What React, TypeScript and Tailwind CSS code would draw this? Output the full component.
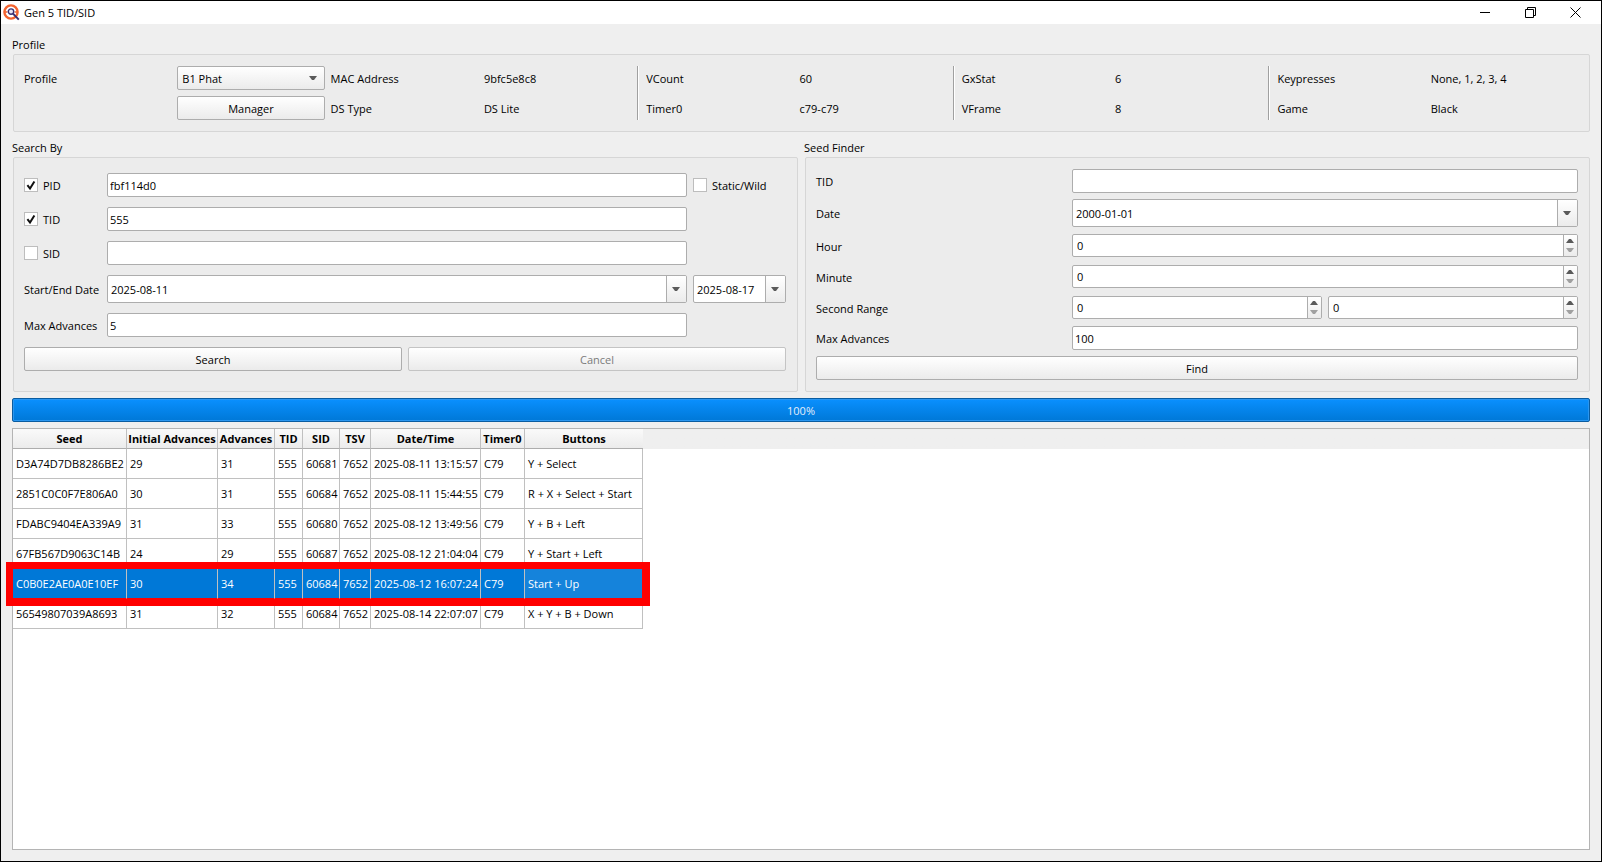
import React, { useState } from "react";

interface SearchResult {
  seed: string;
  initialAdvances: number;
  advances: number;
  tid: number;
  sid: number;
  tsv: number;
  dateTime: string;
  timer0: string;
  buttons: string;
}

const results: SearchResult[] = [
  { seed: "D3A74D7DB8286BE2", initialAdvances: 29, advances: 31, tid: 555, sid: 60681, tsv: 7652, dateTime: "2025-08-11 13:15:57", timer0: "C79", buttons: "Y + Select" },
  { seed: "2851C0C0F7E806A0", initialAdvances: 30, advances: 31, tid: 555, sid: 60684, tsv: 7652, dateTime: "2025-08-11 15:44:55", timer0: "C79", buttons: "R + X + Select + Start" },
  { seed: "FDABC9404EA339A9", initialAdvances: 31, advances: 33, tid: 555, sid: 60680, tsv: 7652, dateTime: "2025-08-12 13:49:56", timer0: "C79", buttons: "Y + B + Left" },
  { seed: "67FB567D9063C14B", initialAdvances: 24, advances: 29, tid: 555, sid: 60687, tsv: 7652, dateTime: "2025-08-12 21:04:04", timer0: "C79", buttons: "Y + Start + Left" },
  { seed: "C0B0E2AE0A0E10EF", initialAdvances: 30, advances: 34, tid: 555, sid: 60684, tsv: 7652, dateTime: "2025-08-12 16:07:24", timer0: "C79", buttons: "Start + Up" },
  { seed: "56549807039A8693", initialAdvances: 31, advances: 32, tid: 555, sid: 60684, tsv: 7652, dateTime: "2025-08-14 22:07:07", timer0: "C79", buttons: "X + Y + B + Down" },
];

const columns = [
  { title: "Seed", width: "w-[114px]" },
  { title: "Initial Advances", width: "w-[91px]" },
  { title: "Advances", width: "w-[57px]" },
  { title: "TID", width: "w-[28px]" },
  { title: "SID", width: "w-[37px]" },
  { title: "TSV", width: "w-[31px]" },
  { title: "Date/Time", width: "w-[110px]" },
  { title: "Timer0", width: "w-[44px]" },
  { title: "Buttons", width: "w-[118px]" },
];

const fieldClass =
  "w-full min-w-0 border border-[#adadad] rounded-[2px] bg-white outline-none";
const buttonClass =
  "h-6 w-full rounded-[2px] border border-[#adadad] bg-linear-to-b from-white to-[#ebebeb] pt-px text-center disabled:border-[#c4c4c4] disabled:text-[#7b7b7b]";

const ArrowDown = ({ className = "" }: { className?: string }) => (
  <svg className={className} width="8" height="4" viewBox="0 0 8 4">
    <path d="M0 0h8L5 4H3z" fill="currentColor" />
  </svg>
);

const ArrowUp = () => (
  <svg width="8" height="4" viewBox="0 0 8 4">
    <path d="M0 4h8L5 0H3z" fill="currentColor" />
  </svg>
);

interface FieldProps {
  id: string;
  value?: string;
  label?: string;
}

const TextField: React.FC<FieldProps> = ({ id, value = "", label }) => (
  <input
    id={id}
    type="text"
    aria-label={label}
    defaultValue={value}
    className={`${fieldClass} h-6 px-[2px]`}
  />
);

const DateField: React.FC<FieldProps> = ({ id, value, label }) => (
  <div className={`${fieldClass} flex h-7 overflow-hidden`}>
    <input
      id={id}
      type="text"
      aria-label={label}
      defaultValue={value}
      className="min-w-0 flex-1 pt-px pl-[3px] outline-none"
    />
    <button
      type="button"
      aria-label="Open calendar"
      className="flex w-5 items-center justify-center border-l border-[#adadad] bg-linear-to-b from-white to-[#ebebeb] pr-[2px] text-[#5a5a5a]"
    >
      <ArrowDown />
    </button>
  </div>
);

const SpinField: React.FC<FieldProps> = ({ id, value = "0", label }) => {
  const [count, setCount] = useState(Number(value));

  return (
    <div className={`${fieldClass} flex h-[23px] overflow-hidden`}>
      <input
        id={id}
        type="text"
        inputMode="numeric"
        aria-label={label}
        value={count}
        onChange={(e) => setCount(Number(e.target.value) || 0)}
        className="min-w-0 flex-1 pl-1 outline-none"
      />
      <div className="flex w-[14px] flex-col border-l border-[#adadad] bg-linear-to-b from-white to-[#ebebeb] py-px pr-px">
        <button
          type="button"
          aria-label="Increase"
          onClick={() => setCount(count + 1)}
          className="flex flex-1 items-center justify-center text-[#5a5a5a]"
        >
          <ArrowUp />
        </button>
        <button
          type="button"
          aria-label="Decrease"
          disabled={count === 0}
          onClick={() => setCount(count - 1)}
          className="flex flex-1 items-center justify-center text-[#5a5a5a] disabled:text-[#a0a0a0]"
        >
          <ArrowDown />
        </button>
      </div>
    </div>
  );
};

const CheckField = ({ label, checked = false }: { label: string; checked?: boolean }) => (
  <label className="flex items-center gap-[5px]">
    <span className="relative h-[14px] w-[14px]">
      <input
        type="checkbox"
        defaultChecked={checked}
        className="peer block h-[14px] w-[14px] appearance-none border border-[#bdbdbd] bg-white"
      />
      <svg
        className="pointer-events-none absolute inset-0 hidden peer-checked:block"
        width="14"
        height="14"
        viewBox="0 0 14 14"
      >
        <path d="M3.4 7.2L6 10.6L10.4 3.4" fill="none" stroke="#111" strokeWidth="2" />
      </svg>
    </span>
    <span className="pt-[2px]">{label}</span>
  </label>
);

const FieldLabel = ({ htmlFor, children }: { htmlFor: string; children: React.ReactNode }) => (
  <label htmlFor={htmlFor} className="pt-[2px]">
    {children}
  </label>
);

const GroupBox = ({ title, children }: { title: string; children: React.ReactNode }) => (
  <section className="flex min-w-0 flex-col">
    <h2 className="mb-px">{title}</h2>
    <div className="ml-px flex-1 rounded-[2px] border border-[#d6d6d6] bg-[#ececec] pr-[11px] pl-[10px]">
      {children}
    </div>
  </section>
);

const Divider = () => (
  <div className="row-span-2 w-[2px] border-l border-[#a0a0a0] bg-white" />
);

const TitleBar = () => (
  <header className="flex h-[23px] items-center bg-white">
    <svg className="ml-[2px]" width="17" height="17" viewBox="0 0 17 17">
      <circle cx="8" cy="8" r="6.6" fill="#fff" stroke="#f4632f" strokeWidth="2.4" />
      <path d="M1 8h3.4M11.6 8h3" stroke="#f4632f" strokeWidth="1.6" />
      <circle cx="8" cy="7.6" r="2.7" fill="#e9e6f5" stroke="#3a2f70" strokeWidth="1.4" />
      <path d="M10 9.6L15.8 15.6" stroke="#3a2f70" strokeWidth="2" />
    </svg>
    <h1 className="ml-1 flex-1">Gen 5 TID/SID</h1>
    <button type="button" aria-label="Minimize" className="flex w-[45px] justify-center">
      <svg width="11" height="11" viewBox="0 0 11 11">
        <path d="M0 5.5h10" stroke="#000" />
      </svg>
    </button>
    <button type="button" aria-label="Restore" className="flex w-[45px] justify-center">
      <svg width="11" height="11" viewBox="0 0 11 11" fill="none" stroke="#000">
        <path d="M.5 2.5h8v8h-8zM2.5 2.5v-2h8v8h-2" />
      </svg>
    </button>
    <button type="button" aria-label="Close" className="mr-[3px] flex w-[45px] justify-center">
      <svg width="11" height="11" viewBox="0 0 11 11" stroke="#000">
        <path d="M.5 .5l10 10M10.5 .5l-10 10" />
      </svg>
    </button>
  </header>
);

const ProfileBox = () => (
  <GroupBox title="Profile">
    <div className="grid grid-cols-[repeat(4,minmax(0,1fr))_3px_repeat(2,minmax(0,1fr))_3px_repeat(2,minmax(0,1fr))_3px_repeat(2,minmax(0,1fr))] grid-rows-[24px_24px] gap-[6px] py-[11px] leading-[26px]">
      <label htmlFor="profile">Profile</label>
      <div className="relative">
        <select
          id="profile"
          className={`${buttonClass} block appearance-none pl-1 text-left leading-5`}
        >
          <option>B1 Phat</option>
        </select>
        <ArrowDown className="pointer-events-none absolute top-[10px] right-2 text-[#5a5a5a]" />
      </div>
      <span>MAC Address</span>
      <span>9bfc5e8c8</span>
      <Divider />
      <span>VCount</span>
      <span>60</span>
      <Divider />
      <span>GxStat</span>
      <span>6</span>
      <Divider />
      <span>Keypresses</span>
      <span>None, 1, 2, 3, 4</span>

      <button type="button" className={`${buttonClass} col-start-2 leading-5`}>
        Manager
      </button>
      <span>DS Type</span>
      <span>DS Lite</span>
      <span>Timer0</span>
      <span>c79-c79</span>
      <span>VFrame</span>
      <span>8</span>
      <span>Game</span>
      <span>Black</span>
    </div>
  </GroupBox>
);

const SearchBox = () => (
  <GroupBox title="Search By">
    <div className="grid grid-cols-[77px_minmax(0,1fr)_93px] items-center gap-x-[6px] gap-y-[10px] pt-[15px] whitespace-nowrap">
      <CheckField label="PID" checked />
      <TextField id="search-pid" label="PID" value="fbf114d0" />
      <CheckField label="Static/Wild" />

      <CheckField label="TID" checked />
      <TextField id="search-tid" label="TID" value="555" />
      <span />

      <CheckField label="SID" />
      <TextField id="search-sid" label="SID" />
      <span />

      <FieldLabel htmlFor="start-date">Start/End Date</FieldLabel>
      <DateField id="start-date" value="2025-08-11" />
      <DateField id="end-date" label="End Date" value="2025-08-17" />

      <FieldLabel htmlFor="search-max">Max Advances</FieldLabel>
      <TextField id="search-max" value="5" />
    </div>
    <div className="mt-[10px] grid grid-cols-2 gap-[6px] pb-5">
      <button type="button" className={buttonClass}>
        Search
      </button>
      <button type="button" disabled className={buttonClass}>
        Cancel
      </button>
    </div>
  </GroupBox>
);

const SeedFinderBox = () => (
  <GroupBox title="Seed Finder">
    <div className="grid grid-cols-3 grid-rows-[24px_28px_25px_25px_25px_24px_24px] items-center gap-[6px] py-[11px]">
      <FieldLabel htmlFor="finder-tid">TID</FieldLabel>
      <div className="col-span-2">
        <TextField id="finder-tid" />
      </div>

      <FieldLabel htmlFor="finder-date">Date</FieldLabel>
      <div className="col-span-2">
        <DateField id="finder-date" value="2000-01-01" />
      </div>

      <FieldLabel htmlFor="finder-hour">Hour</FieldLabel>
      <div className="col-span-2">
        <SpinField id="finder-hour" />
      </div>

      <FieldLabel htmlFor="finder-minute">Minute</FieldLabel>
      <div className="col-span-2">
        <SpinField id="finder-minute" />
      </div>

      <FieldLabel htmlFor="finder-second">Second Range</FieldLabel>
      <SpinField id="finder-second" />
      <SpinField id="finder-second-end" label="Second Range End" />

      <FieldLabel htmlFor="finder-max">Max Advances</FieldLabel>
      <div className="col-span-2">
        <TextField id="finder-max" value="100" />
      </div>

      <button type="button" className={`${buttonClass} col-span-3`}>
        Find
      </button>
    </div>
  </GroupBox>
);

const ResultsTable = () => {
  const [selected, setSelected] = useState(4);

  return (
    <div className="mt-[6px] flex-1 border border-[#b4b4b4] bg-white">
      <div className="bg-linear-to-b from-[#efefef] from-[20px] to-transparent to-[20px]">
        <table className="w-[630px] table-fixed border-separate border-spacing-0 text-left whitespace-nowrap">
          <thead>
            <tr className="h-5 bg-linear-to-b from-[#fafafa] to-[#ebebeb]">
              {columns.map((column) => (
                <th
                  key={column.title}
                  className={`${column.width} border-r border-b border-[#c0c0c0] border-b-[#adadad] p-0 pt-px text-center font-bold last:border-r-0`}
                >
                  {column.title}
                </th>
              ))}
            </tr>
          </thead>
          <tbody>
            {results.map((result, index) => (
              <tr
                key={result.seed}
                onClick={() => setSelected(index)}
                className={
                  index === selected
                    ? "relative h-[30px] bg-[#0078d7] text-white outline-[7px] outline-[#ff0000]"
                    : "h-[30px] bg-white"
                }
              >
                {Object.values(result).map((value, i) => (
                  <td
                    key={i}
                    className={`border-r border-b border-[#c0c0c0] p-0 pl-[3px] ${
                      index === selected ? "border-b-[#ff0000] last:border-r-[#ff0000] last:bg-[#1583db]" : ""
                    }`}
                  >
                    {value}
                  </td>
                ))}
              </tr>
            ))}
          </tbody>
        </table>
      </div>
    </div>
  );
};

const App = () => {
  return (
    <div className="flex min-h-screen flex-col border border-black bg-[#efefef] font-['Open_Sans','Noto_Sans',sans-serif] text-[11px] leading-4 text-black">
      <TitleBar />
      <main className="flex flex-1 flex-col px-[11px] pt-[13px] pb-[11px]">
        <ProfileBox />
        <div className="mt-2 grid grid-cols-2 gap-[6px]">
          <SearchBox />
          <SeedFinderBox />
        </div>
        <div
          role="progressbar"
          aria-valuenow={100}
          className="mt-[6px] h-6 rounded-[2px] border border-[#0a5ca0] bg-linear-to-b from-[#0a90ff] to-[#0078d7] text-center leading-6 text-[#e4eefb] inset-ring inset-ring-[#2a96f0]"
        >
          100%
        </div>
        <ResultsTable />
      </main>
    </div>
  );
};

export default App;
